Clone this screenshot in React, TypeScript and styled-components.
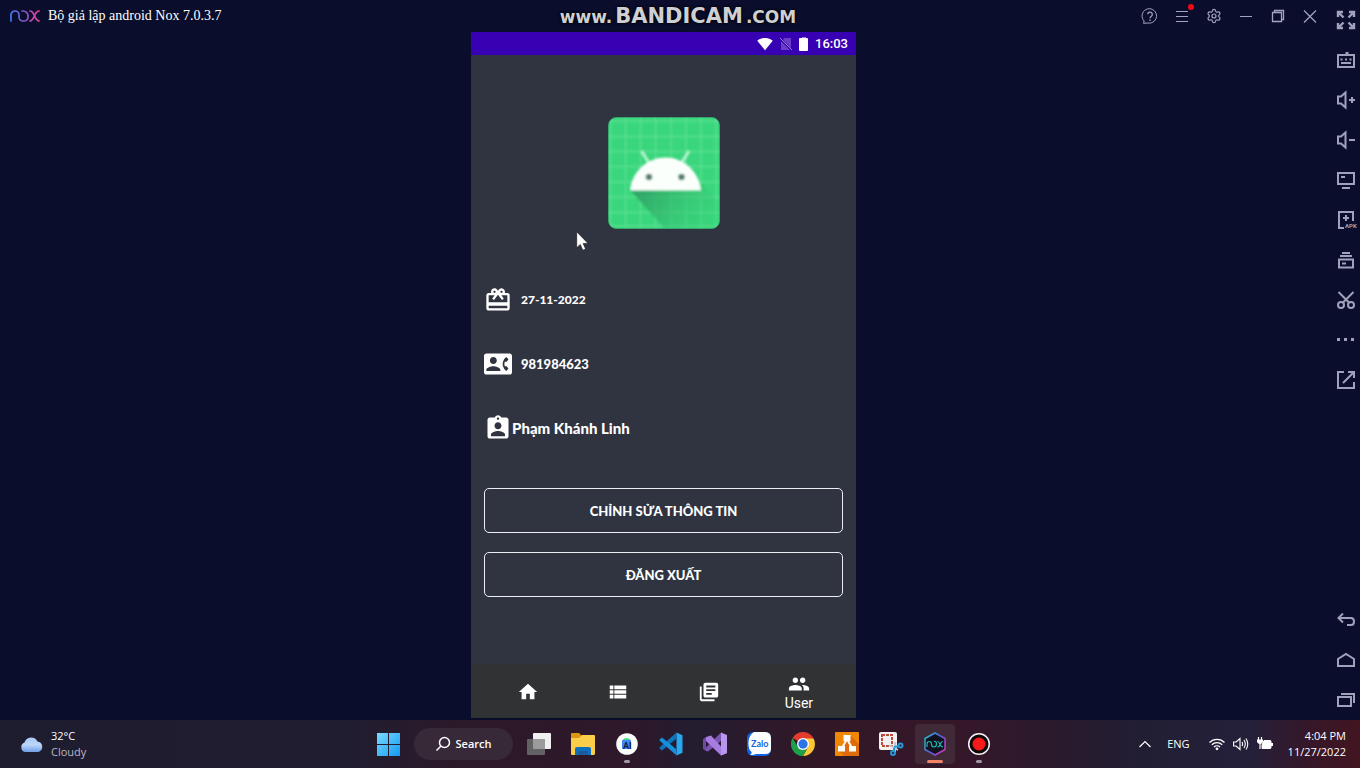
import React from 'react';
import styled, { createGlobalStyle } from 'styled-components';
import {
  MdCardGiftcard,
  MdContactPhone,
  MdAssignmentInd,
  MdHome,
  MdViewList,
  MdLibraryBooks,
  MdPeople,
  MdSignalWifi4Bar,
} from 'react-icons/md';
import { Settings } from 'lucide-react';

const GlobalStyle = createGlobalStyle`
  *, *::before, *::after { box-sizing: border-box; }
  body { margin: 0; background: #0a0e2c; }
  button { margin: 0; padding: 0; border: 0; background: none; color: inherit; font: inherit; cursor: pointer; }
  h1, p { margin: 0; font-weight: inherit; }
  svg { display: block; flex: none; }
`;

const Desktop = styled.div`
  min-height: 100vh;
  display: flex;
  flex-direction: column;
  background: #0a0e2c;
  color: #fff;
`;

/* ---------- emulator window ---------- */

const Emulator = styled.main`
  flex: 1;
  display: flex;
`;

const Workspace = styled.div`
  flex: 1;
  display: flex;
  flex-direction: column;
`;

const TitleBar = styled.header`
  height: 32px;
  padding: 0 6px 0 10px;
  display: grid;
  grid-template-columns: 1fr auto 1fr;
  align-items: center;
`;

const Brand = styled.div`
  display: flex;
  align-items: center;
  gap: 8px;
`;

const AppTitle = styled.h1`
  font: 14px/20px 'Liberation Serif', serif;
  white-space: nowrap;
`;

const Watermark = styled.div`
  display: flex;
  align-items: baseline;
  gap: 3px;
  margin-left: 20px;
  font: 700 17px/24px 'DejaVu Sans', sans-serif;
  color: #cfd0d4;
  text-shadow: 0 0 3px #000, 0 0 3px #000;
`;

const WatermarkName = styled.span`
  font-size: 21px;
`;

const WindowControls = styled.div`
  display: flex;
  justify-content: flex-end;
  color: #a3a5bf;
`;

const ControlButton = styled.button`
  width: 32px;
  height: 32px;
  display: grid;
  place-items: center;
`;

const Rail = styled.aside`
  width: 28px;
  display: flex;
  flex-direction: column;
  justify-content: space-between;
  color: #a0a2bb;
`;

const RailGroup = styled.div`
  display: flex;
  flex-direction: column;
`;

const RailButton = styled.button`
  height: 40px;
  display: grid;
  place-items: center;
`;

/* ---------- phone ---------- */

const Stage = styled.div`
  flex: 1;
  display: flex;
  justify-content: center;
  padding: 0 5px 2px 0;
`;

const Phone = styled.section`
  position: relative;
  width: min(100%, 385px);
  display: flex;
  flex-direction: column;
  background: #303440;
`;

const StatusBar = styled.div`
  height: 23px;
  padding: 0 8px;
  display: flex;
  align-items: center;
  justify-content: flex-end;
  gap: 7px;
  background: #3700b3;
  font: 500 13px/20px Roboto, sans-serif;
`;

const Profile = styled.div`
  flex: 1;
  padding: 62px 13px 0;
  display: flex;
  flex-direction: column;
`;

const Avatar = styled.div`
  display: flex;
  justify-content: center;
  margin-bottom: 39px;
`;

const InfoRow = styled.div<{ $gap: number; $size: number }>`
  height: 64px;
  display: flex;
  align-items: center;
  gap: ${(p) => p.$gap}px;
  font: 900 ${(p) => p.$size}px/20px Lato, 'Noto Sans', sans-serif;
`;

const Actions = styled.div`
  display: flex;
  flex-direction: column;
  gap: 19px;
  margin-top: 28px;
`;

const OutlineButton = styled.button`
  height: 45px;
  border: 1px solid #eceef4;
  border-radius: 5px;
  font: 900 13px/20px Lato, 'Noto Sans', sans-serif;
`;

const BottomNav = styled.nav`
  height: 54px;
  padding: 2px 12px 0;
  display: flex;
  background: #313234;
`;

const NavItem = styled.button`
  flex: 1;
  display: flex;
  flex-direction: column;
  align-items: center;
  justify-content: center;
`;

const NavLabel = styled.span`
  font: 14px/16px Roboto, sans-serif;
`;

const Pointer = styled.div`
  position: absolute;
  left: 105px;
  top: 199px;
`;

/* ---------- taskbar ---------- */

const Taskbar = styled.footer`
  height: 48px;
  padding: 0 14px 0 20px;
  display: grid;
  grid-template-columns: 1fr auto 1fr;
  align-items: center;
  background: linear-gradient(90deg, #1e1c2f 0%, #211d30 26%, #2c1929 34%, #2e1829 46%, #241c30 51%, #321827 60%, #35172a 71%, #2b1a2c 77%, #211e34 84%, #25203a 92%, #35172a 96%, #421520 100%);
  font: 11px/16px 'Open Sans', 'Noto Sans', sans-serif;
`;

const Weather = styled.div`
  display: flex;
  align-items: center;
  gap: 7px;
`;

const Muted = styled.p`
  color: #b9b8c2;
`;

const TaskApps = styled.div`
  display: flex;
  align-items: center;
`;

const TaskButton = styled.button<{ $active?: boolean; $mark?: boolean }>`
  position: relative;
  width: 40px;
  height: 40px;
  margin: 0 2px;
  display: grid;
  place-items: center;
  border-radius: 4px;
  background: ${(p) => (p.$active ? '#412a38' : 'transparent')};

  &::after {
    content: '';
    display: ${(p) => (p.$active || p.$mark ? 'block' : 'none')};
    position: absolute;
    bottom: 1px;
    left: 50%;
    transform: translateX(-50%);
    width: ${(p) => (p.$active ? 16 : 6)}px;
    height: 3px;
    border-radius: 2px;
    background: ${(p) => (p.$active ? '#f28268' : '#a298a2')};
  }
`;

const SearchButton = styled.button`
  width: 99px;
  height: 32px;
  margin: 0 4px;
  display: flex;
  align-items: center;
  justify-content: center;
  gap: 5px;
  border-radius: 16px;
  background: #372938;
  font-weight: 600;
`;

const Tray = styled.div`
  display: flex;
  align-items: center;
  justify-content: flex-end;
`;

const TrayIcons = styled.div`
  display: flex;
  align-items: center;
  gap: 8px;
  margin: 0 15px 0 19px;
`;

const Language = styled.span`
  margin-left: 15px;
`;

const Clock = styled.div`
  text-align: right;
`;

/* ---------- drawings ---------- */

const NoxLogo = () => (
  <svg width="30" height="12" viewBox="0 0 30 12" fill="none" strokeWidth="1.7" strokeLinecap="round">
    <defs>
      <linearGradient id="noxGrad" x1="0" y1="0" x2="30" y2="0" gradientUnits="userSpaceOnUse">
        <stop offset="0" stopColor="#3f7cf5" />
        <stop offset="0.5" stopColor="#8a55c8" />
        <stop offset="1" stopColor="#ee3b92" />
      </linearGradient>
    </defs>
    <g stroke="url(#noxGrad)">
      <path d="M1 11V5a4 4 0 0 1 8 0v2a4 4 0 0 0 4 4h1a4 4 0 0 0 4-5a5 5 0 0 0-5-5h-1" />
      <path d="M20 1c3 0 3 2 4.500 5S27 11 29.200 11M29.200 1C26 1 26 3 24.500 6S22 11 20 11" />
    </g>
  </svg>
);

const Line = ({ children }: { children: React.ReactNode }) => (
  <svg width="20" height="20" viewBox="0 0 20 20" fill="none" stroke="currentColor" strokeWidth="2" overflow="visible">
    {children}
  </svg>
);

const railTop: [string, React.ReactNode][] = [
  [
    'Full screen',
    <path d="M2 7V2h5M2 2l5.500 5.500M13 2h5v5M18 2l-5.500 5.500M2 13v5h5M2 18l5.500-5.500M18 13v5h-5M18 18l-5.500-5.500" strokeWidth="2.400" />,
  ],
  ['Keyboard', <path d="M2 5h16v12H2zM9.500 3h3M4.500 9.500h2M9 9.500h2M13.500 9.500h2M5 13h10" />],
  ['Volume up', <path d="M2 6.500h3L9.500 2.500v15L5 13.500H2zM13 10h6M16 7v6" />],
  ['Volume down', <path d="M2 6.500h3L9.500 2.500v15L5 13.500H2zM13 10h6" />],
  ['Screen', <path d="M2 3h16v11H2zM5 7h4M6 18h8" />],
  [
    'Install APK',
    <>
      <path d="M17 11V2H3v16h5M7 8h6M10 5v6" />
      <text x="9" y="18" fill="currentColor" stroke="none" fontSize="6" fontWeight="700" fontFamily="Roboto, sans-serif">APK</text>
    </>,
  ],
  ['Multi instance', <path d="M6 3h8M4 6h12M3 9.500h14v8H3zM6 13.500h4" />],
  [
    'Screenshot',
    <>
      <path d="M2.500 2l11 11M17.500 2L6.500 13" />
      <circle cx="5" cy="15" r="3" />
      <circle cx="15" cy="15" r="3" />
    </>,
  ],
  ['More', <path d="M1 9.500h3M8 9.500h3M15 9.500h3" strokeWidth="3" />],
  ['Expand', <path d="M8 2H2v16h16v-6M7 13L17.500 2.500M12 2h6v6" />],
];

const railBottom: [string, React.ReactNode][] = [
  ['Back', <path d="M7 3.500L2.500 8L7 12.500M3 8h12q3 0 3 3.500t-3 3.500h-4" />],
  ['Home', <path d="M2 16V9l8-5l8 5v7z" />],
  ['Recent apps', <path d="M2 7h13v9H2zM5 4h13v9" />],
];

const windowControls: [string, React.ReactNode][] = [
  [
    'Help',
    <>
      <path d="M4.200 15A7.200 7.200 0 1 1 8 17L3.500 17.300z" />
      <path d="M7.700 8.300a2.300 2.300 0 1 1 3.700 1.900Q10 11.200 10 12.300M10 13.500v1.500" strokeWidth="1.300" />
    </>,
  ],
  [
    'Menu',
    <>
      <path d="M4 5.500h12M4 10.500h12M4 15.500h12" />
      <circle cx="19" cy="1" r="3" fill="#f30a12" stroke="none" />
    </>,
  ],
  ['Settings', null],
  ['Minimize', <path d="M4 10.500h12" />],
  ['Restore', <path d="M4.500 6.500h9v9h-9zM6.500 6V4.500h9v9H14" strokeWidth="1.300" />],
  ['Close', <path d="M4 4.500l12 12M16 4.500l-12 12" strokeWidth="1.200" />],
];

const AndroidAvatar = () => (
  <svg width="112" height="112" viewBox="0 0 112 112" role="img" aria-label="Profile picture">
    <defs>
      <linearGradient id="shade" x1="40" y1="70" x2="95" y2="112" gradientUnits="userSpaceOnUse">
        <stop offset="0" stopColor="#2fa265" />
        <stop offset="1" stopColor="#36cf78" stopOpacity="0.300" />
      </linearGradient>
      <clipPath id="tile">
        <rect x="0.500" y="0.500" width="111" height="111" rx="8" />
      </clipPath>
      <filter id="soft">
        <feGaussianBlur stdDeviation="0.900" />
      </filter>
    </defs>
    <rect x="0.500" y="0.500" width="111" height="111" rx="8" fill="#3ad67d" stroke="#35a569" />
    <g clipPath="url(#tile)" filter="url(#soft)">
      <path
        d="M2.500 0v112M17.500 0v112M32.500 0v112M47.500 0v112M63 0v112M78 0v112M93 0v112M108 0v112M0 4h112M0 19.500h112M0 34.500h112M0 49.500h112M0 65h112M0 80h112M0 95.500h112M0 109h112"
        stroke="#69e69d"
        strokeWidth="1.300"
        opacity="0.700"
      />
      <path d="M22 73L57 112H112V86L93 66z" fill="url(#shade)" opacity="0.850" />
      <path d="M33.500 34l7.500 12M81 34l-7.500 12" stroke="#b9f6d2" strokeWidth="3" />
      <path d="M22 73.500C24 54 40 40.500 57.500 40.500S91 54 93 73.500z" fill="#fbfffc" />
      <circle cx="41" cy="60" r="3.300" fill="#53806b" />
      <circle cx="73.500" cy="60" r="3.300" fill="#53806b" />
    </g>
  </svg>
);

const NoSim = () => (
  <svg width="12" height="14" viewBox="0 0 12 14">
    <path d="M4 1h7v10L3 3zM1 4l9 9H1z" fill="#6a3fc6" />
    <path d="M0 1l12 12" stroke="#9678d8" />
  </svg>
);

const PhoneBattery = () => (
  <svg width="9" height="14" viewBox="0 0 9 14">
    <path d="M3 0h4v2H3z" fill="#9b80dc" />
    <rect y="1" width="9" height="13" rx="1" fill="#fff" />
  </svg>
);

const CloudIcon = () => (
  <svg width="24" height="17" viewBox="0 0 24 17">
    <defs>
      <linearGradient id="cloud" x1="0" y1="0" x2="0" y2="1">
        <stop offset="0" stopColor="#a8c8f5" />
        <stop offset="0.500" stopColor="#bdd6fa" />
        <stop offset="1" stopColor="#6f9ee6" />
      </linearGradient>
    </defs>
    <path d="M5 16a5 5 0 0 1-.5-9.500A7 7 0 0 1 17.500 5.500A5.400 5.400 0 0 1 18.500 16z" fill="url(#cloud)" />
  </svg>
);

const WindowsIcon = () => (
  <svg width="24" height="24" viewBox="0 0 24 24">
    <defs>
      <linearGradient id="win" x1="0" y1="0" x2="24" y2="24" gradientUnits="userSpaceOnUse">
        <stop offset="0" stopColor="#7fdcff" />
        <stop offset="1" stopColor="#129af2" />
      </linearGradient>
    </defs>
    <path d="M1 1h11v11H1zM13 1h11v11H13zM1 13h11v11H1zM13 13h11v11H13z" fill="url(#win)" />
  </svg>
);

const TaskViewIcon = () => (
  <svg width="24" height="24" viewBox="0 0 24 24">
    <rect x="6" y="1" width="18" height="16" rx="1" fill="#f1f0f1" />
    <rect x="0" y="7" width="18" height="16" rx="1" fill="#626164" />
    <path d="M6 7h12v10H6z" fill="#9b9b9c" />
  </svg>
);

const ExplorerIcon = () => (
  <svg width="24" height="24" viewBox="0 0 24 24">
    <path d="M0 2q0-1 1-1h7l3 3H23q1 0 1 1v4H0z" fill="#dc9712" />
    <path d="M0 6h8l3-3h12q1 0 1 1v17q0 2-1 2H1q-1 0-1-1z" fill="#fccd49" />
    <path d="M4 23v-6q0-2 2-2h12q2 0 2 2v6z" fill="#0f6fc0" />
    <path d="M7 19h10v4H7z" fill="#1a5d9e" />
  </svg>
);

const StudioIcon = () => (
  <svg width="24" height="24" viewBox="0 0 24 24">
    <circle cx="12" cy="12" r="10.800" fill="#fafbfb" />
    <path d="M7 8.500a5 4.500 0 0 1 9 0z" fill="#3ddc84" />
    <rect x="7" y="8" width="9" height="9" rx="1" fill="#4285f4" />
    <text x="8" y="17" fontSize="9" fontWeight="700" fontFamily="Roboto, sans-serif" fill="#0b2545">AI</text>
  </svg>
);

const CodeIcon = () => (
  <svg width="24" height="24" viewBox="0 0 24 24">
    <path d="M17 7L3 18.500L0.500 16.500V15.500L17.500 0.500z" fill="#0a74bd" />
    <path d="M17 17L3 5.500L0.500 7.500V8.500L17.500 23.500z" fill="#1690dc" />
    <path d="M17.500 0.500L23.500 3.300V20.700L17.500 23.500V7z" fill="#28a8ef" />
  </svg>
);

const VisualStudioIcon = () => (
  <svg width="24" height="24" viewBox="0 0 24 24">
    <path d="M0 7l3-2v14l-3-2z" fill="#6f4aa5" />
    <path d="M3 19V15.500L18 0.500V9L5 19.500z" fill="#7b54b4" />
    <path d="M3 5L8 3.500L24 21L18 23.500L3 9z" fill="#a67ce0" />
    <path d="M18 0.500L24 3V21L18 23.500z" fill="#b996ee" />
  </svg>
);

const ZaloIcon = () => (
  <svg width="24" height="24" viewBox="0 0 24 24">
    <rect width="24" height="24" rx="6" fill="#0c63e8" />
    <path d="M7 0H18q6 0 6 6V17q0 5-6 5H9q-3 1.500-6 .8q2-1 1.500-2.800Q1 17 1.500 10Q2 3 7 0z" fill="#fff" />
    <text x="4" y="15" fontSize="9" fontWeight="700" fontFamily="Lato, sans-serif" fill="#1464e4">Zalo</text>
  </svg>
);

const ChromeIcon = () => (
  <svg width="24" height="24" viewBox="0 0 24 24">
    <path d="M12 12L1.600 6A12 12 0 0 1 22.400 6z" fill="#e33b2e" />
    <path d="M12 6.500H22.600A12 12 0 0 1 12 24L17 15z" fill="#fcc934" />
    <path d="M1.600 6L7 15L12 17.500L16.500 15L12 24A12 12 0 0 1 1.600 6z" fill="#1ea04b" />
    <circle cx="12" cy="12" r="6" fill="#fff" />
    <circle cx="12" cy="12" r="4.700" fill="#2a74e8" />
  </svg>
);

const DiagramIcon = () => (
  <svg width="24" height="24" viewBox="0 0 24 24">
    <rect width="24" height="24" rx="1" fill="#f08705" />
    <path d="M16 4l8 8v12H9l-5-5z" fill="#df6c0c" />
    <path d="M12 7L7 16M12 7l5 9" stroke="#fff" strokeWidth="2" />
    <path d="M8.500 3h7v6h-7zM3 14h7v5.500H3zM14 14h7v5.500h-7z" fill="#fff" />
  </svg>
);

const SnipIcon = () => (
  <svg width="26" height="24" viewBox="0 0 26 24" fill="none">
    <rect x="1" y="0" width="18" height="18" rx="2" fill="#f2f0f1" />
    <rect x="4" y="3" width="10" height="11" stroke="#b84d3b" strokeWidth="2" strokeDasharray="3 1" />
    <path d="M11 13l9 5M17 20V10" stroke="#c3c9ce" strokeWidth="2" />
    <path d="M16 15l5-1M16 19v-3" stroke="#2996d6" strokeWidth="2" />
    <circle cx="22.500" cy="13.500" r="2" stroke="#2996d6" strokeWidth="2" />
    <circle cx="15" cy="21" r="2" stroke="#2996d6" strokeWidth="2" />
  </svg>
);

const NoxAppIcon = () => (
  <svg width="24" height="24" viewBox="0 0 24 24" fill="none">
    <defs>
      <linearGradient id="hex" x1="0" y1="4" x2="24" y2="20" gradientUnits="userSpaceOnUse">
        <stop offset="0" stopColor="#1fc9c6" />
        <stop offset="0.500" stopColor="#5d5be0" />
        <stop offset="1" stopColor="#e632b4" />
      </linearGradient>
    </defs>
    <path d="M12 1L22 6.500v11L12 23L2 17.500v-11z" fill="#10121f" stroke="url(#hex)" strokeWidth="1.500" strokeLinejoin="round" />
    <path
      d="M4 15v-3q0-2.500 2.200-2.500T8.500 12q0 3 2.500 3T13.500 12T11 9.500M14.500 9.500q1.500 0 2.500 2.700T20 15M20 9.500q-1.700 0-2.700 2.700T14.500 15"
      stroke="#1fb8ab"
      strokeWidth="1.200"
    />
  </svg>
);

const RecorderIcon = () => (
  <svg width="24" height="24" viewBox="0 0 24 24">
    <circle cx="12" cy="12" r="10.300" fill="#0d0a0c" stroke="#f5f3f4" strokeWidth="1.500" />
    <circle cx="12" cy="12" r="6.500" fill="#f8191a" />
  </svg>
);

const SearchIcon = () => (
  <svg width="16" height="16" viewBox="0 0 16 16" fill="none" stroke="#fff" strokeWidth="1.500">
    <circle cx="9.500" cy="6.500" r="5" />
    <path d="M6 10L1.500 14.500" />
  </svg>
);

const ChevronUp = () => (
  <svg width="14" height="8" viewBox="0 0 14 8" fill="none" stroke="#fff" strokeWidth="1.200">
    <path d="M1.500 7L7 1.500L12.500 7" />
  </svg>
);

const WifiIcon = () => (
  <svg width="16" height="16" viewBox="0 0 16 16" fill="none" stroke="#fff" strokeWidth="1.300">
    <path d="M0.500 6.500a10.500 10.500 0 0 1 15 0M2.800 8.800a7.400 7.400 0 0 1 10.400 0M5 11a4.300 4.300 0 0 1 6 0" />
    <circle cx="8" cy="12.800" r="1.400" fill="#fff" stroke="none" />
  </svg>
);

const VolumeIcon = () => (
  <svg width="16" height="16" viewBox="0 0 16 16" fill="none" stroke="#fff" strokeWidth="1.100">
    <path d="M0.600 6h2.500L7 2.500v11L3.100 10H0.600zM9 6q1.200 2 0 4M11 4q2.500 4 0 8M13 2.500q3.500 5.500 0 11" />
  </svg>
);

const BatteryIcon = () => (
  <svg width="16" height="16" viewBox="0 0 16 16" fill="none" stroke="#fff">
    <path d="M1.500 1v3M4.500 1v3M3 7v6" strokeWidth="1.200" />
    <path d="M0 3.500h6V6q-1 2-3 2T0 6z" fill="#fff" stroke="none" />
    <path d="M7 4.500h6q1 0 1 1v6q0 1-1 1H5V9z" fill="#fff" />
    <path d="M15 7v3" strokeWidth="2" />
  </svg>
);

const CursorIcon = () => (
  <svg width="13" height="20" viewBox="0 0 12 19">
    <path d="M0.500 0.800V16l3.400-3.200L6.300 18.300L9 17.200L6.600 11.800H11.300z" fill="#fff" stroke="#15161c" strokeWidth="0.600" />
  </svg>
);

const info = [
  { icon: <MdCardGiftcard size={28} />, text: '27-11-2022', gap: 9, size: 12 },
  { icon: <MdContactPhone size={28} />, text: '981984623', gap: 9, size: 13 },
  { icon: <MdAssignmentInd size={28} />, text: 'Phạm Khánh Linh', gap: 0, size: 15 },
];

const pinned = [
  { name: 'Task view', icon: <TaskViewIcon /> },
  { name: 'File Explorer', icon: <ExplorerIcon /> },
  { name: 'Android Studio', icon: <StudioIcon />, mark: true },
  { name: 'Visual Studio Code', icon: <CodeIcon /> },
  { name: 'Visual Studio', icon: <VisualStudioIcon /> },
  { name: 'Zalo', icon: <ZaloIcon /> },
  { name: 'Chrome', icon: <ChromeIcon /> },
  { name: 'Diagrams', icon: <DiagramIcon /> },
  { name: 'Snipping Tool', icon: <SnipIcon /> },
  { name: 'Nox', icon: <NoxAppIcon />, active: true },
  { name: 'Recorder', icon: <RecorderIcon />, mark: true },
];

export default function App() {
  return (
    <Desktop>
      <GlobalStyle />
      <Emulator>
        <Workspace>
          <TitleBar>
            <Brand>
              <NoxLogo />
              <AppTitle>Bộ giả lập android Nox 7.0.3.7</AppTitle>
            </Brand>
            <Watermark>
              <span>www.</span>
              <WatermarkName>BANDICAM</WatermarkName>
              <span>.COM</span>
            </Watermark>
            <WindowControls>
              {windowControls.map(([name, shape]) => (
                <ControlButton key={name} aria-label={name}>
                  {shape ? (
                    <svg width="20" height="20" viewBox="0 0 20 20" fill="none" stroke="currentColor" overflow="visible">
                      {shape}
                    </svg>
                  ) : (
                    <Settings size={16} strokeWidth={1.8} />
                  )}
                </ControlButton>
              ))}
            </WindowControls>
          </TitleBar>

          <Stage>
            <Phone>
              <StatusBar>
                <MdSignalWifi4Bar size={16} />
                <NoSim />
                <PhoneBattery />
                <span>16:03</span>
              </StatusBar>
              <Profile>
                <Avatar>
                  <AndroidAvatar />
                </Avatar>
                {info.map((row) => (
                  <InfoRow key={row.text} $gap={row.gap} $size={row.size}>
                    {row.icon}
                    <span>{row.text}</span>
                  </InfoRow>
                ))}
                <Actions>
                  <OutlineButton>CHỈNH SỬA THÔNG TIN</OutlineButton>
                  <OutlineButton>ĐĂNG XUẤT</OutlineButton>
                </Actions>
              </Profile>
              <BottomNav>
                <NavItem aria-label="Home"><MdHome size={22} /></NavItem>
                <NavItem aria-label="List"><MdViewList size={22} /></NavItem>
                <NavItem aria-label="Library"><MdLibraryBooks size={22} /></NavItem>
                <NavItem>
                  <MdPeople size={22} />
                  <NavLabel>User</NavLabel>
                </NavItem>
              </BottomNav>
              <Pointer>
                <CursorIcon />
              </Pointer>
            </Phone>
          </Stage>
        </Workspace>

        <Rail>
          <RailGroup>
            {railTop.map(([name, shape]) => (
              <RailButton key={name} aria-label={name}>
                <Line>{shape}</Line>
              </RailButton>
            ))}
          </RailGroup>
          <RailGroup>
            {railBottom.map(([name, shape]) => (
              <RailButton key={name} aria-label={name}>
                <Line>{shape}</Line>
              </RailButton>
            ))}
          </RailGroup>
        </Rail>
      </Emulator>

      <Taskbar>
        <Weather>
          <CloudIcon />
          <div>
            <p>32°C</p>
            <Muted>Cloudy</Muted>
          </div>
        </Weather>
        <TaskApps>
          <TaskButton aria-label="Start"><WindowsIcon /></TaskButton>
          <SearchButton>
            <SearchIcon />
            Search
          </SearchButton>
          {pinned.map((app) => (
            <TaskButton key={app.name} aria-label={app.name} $active={app.active} $mark={app.mark}>
              {app.icon}
            </TaskButton>
          ))}
        </TaskApps>
        <Tray>
          <ChevronUp />
          <Language>ENG</Language>
          <TrayIcons>
            <WifiIcon />
            <VolumeIcon />
            <BatteryIcon />
          </TrayIcons>
          <Clock>
            <p>4:04 PM</p>
            <p>11/27/2022</p>
          </Clock>
        </Tray>
      </Taskbar>
    </Desktop>
  );
}
